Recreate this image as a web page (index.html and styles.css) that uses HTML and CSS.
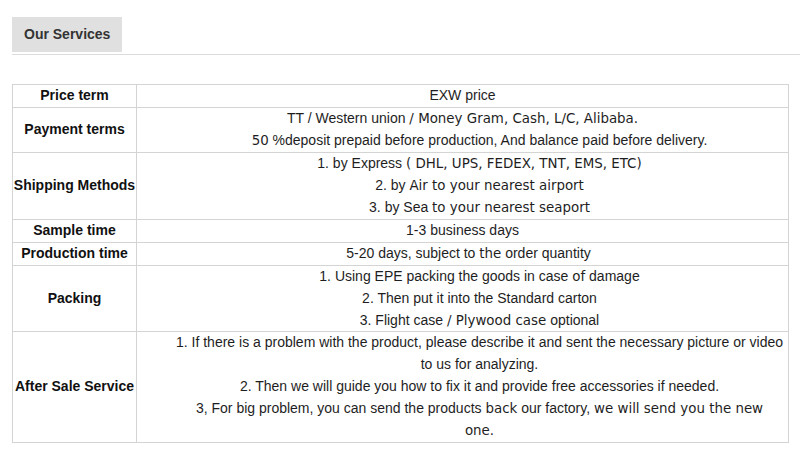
FILE: index.html
```html
<!DOCTYPE html>
<html>
<head>
<meta charset="utf-8">
<link rel="stylesheet" href="styles.css">
</head>
<body>
<div class="tabs">
  <div class="tab">Our Services</div>
</div>
<div class="wrap">
<table class="svc">
  <tr>
    <th>Price term</th>
    <td><div class="ln">EXW price</div></td>
  </tr>
  <tr>
    <th>Payment terms</th>
    <td>
      <div class="ln">TT / Western union <span class="v">/ Money Gram, Cash, L/C, Alibaba.</span></div>
      <div class="ln sh"><span class="v">50</span> %deposit prepaid before production, And balance paid before delivery.</div>
    </td>
  </tr>
  <tr>
    <th>Shipping Methods</th>
    <td>
      <div class="ln sh">1. by Express <span class="v">( DHL, UPS, FEDEX, TNT, EMS, ETC)</span></div>
      <div class="ln sh">2. by <span class="v">Air to your nearest airport</span></div>
      <div class="ln sh">3. by Sea <span class="v">to your nearest seaport</span></div>
    </td>
  </tr>
  <tr>
    <th>Sample time</th>
    <td><div class="ln">1-3 business days</div></td>
  </tr>
  <tr>
    <th>Production time</th>
    <td><div class="ln sh2">5-20 days, subject to <span class="v">the</span> order quantity</div></td>
  </tr>
  <tr>
    <th>Packing</th>
    <td>
      <div class="ln sh">1. Using EPE packing the goods in case <span class="v">of</span> damage</div>
      <div class="ln sh">2. Then put it into the Standard carton</div>
      <div class="ln sh">3. Flight case <span class="v">/ Plywood case</span> optional</div>
    </td>
  </tr>
  <tr>
    <th>After Sale Service</th>
    <td>
      <div class="ln sh">1. If there is a problem with the product, please describe it and sent the necessary picture or video</div>
      <div class="ln sh">to us for analyzing.</div>
      <div class="ln sh">2. Then we will guide you how to fix it and provide free accessories if needed.</div>
      <div class="ln sh">3, For big problem, you can send the products <span class="v">back</span> our factory, <span class="v">we will send you the new</span></div>
      <div class="ln sh"><span class="v">one.</span></div>
    </td>
  </tr>
</table>
</div>
</body>
</html>
```

FILE: styles.css
```css
html, body {
  margin: 0;
  padding: 0;
  background: #ffffff;
}
body {
  font-family: "Liberation Sans", Arial, sans-serif;
  color: #1a1a1a;
}
.tabs {
  margin-left: 12px;
  padding-top: 17px;
  border-bottom: 1px solid #dcdcdc;
  margin-bottom: 29px;
  display: flex;
}
.tab {
  background: #e0e0e0;
  color: #333333;
  font-weight: bold;
  font-size: 14px;
  height: 35px;
  line-height: 34px;
  padding: 0 12px;
  margin-bottom: 2px;
}
.wrap {
  padding-left: 12px;
}
.svc {
  border-collapse: collapse;
  width: 777px;
  border: 1px solid #cfcfcf;
  font-size: 14px;
}
.svc th, .svc td {
  border: 1px solid #d4d4d4;
  padding: 0;
  line-height: 21.95px;
  vertical-align: middle;
  text-align: center;
}
.svc th {
  width: 123px;
  font-weight: bold;
  color: #111;
  white-space: nowrap;
}
.svc td {
  color: #1e1e1e;
}
.ln {
  white-space: nowrap;
}
.sh { padding-left: 34px; }
.sh2 { padding-left: 12px; }
.v {
  font-family: "DejaVu Sans", Verdana, sans-serif;
  font-size: 13.4px;
}
```
